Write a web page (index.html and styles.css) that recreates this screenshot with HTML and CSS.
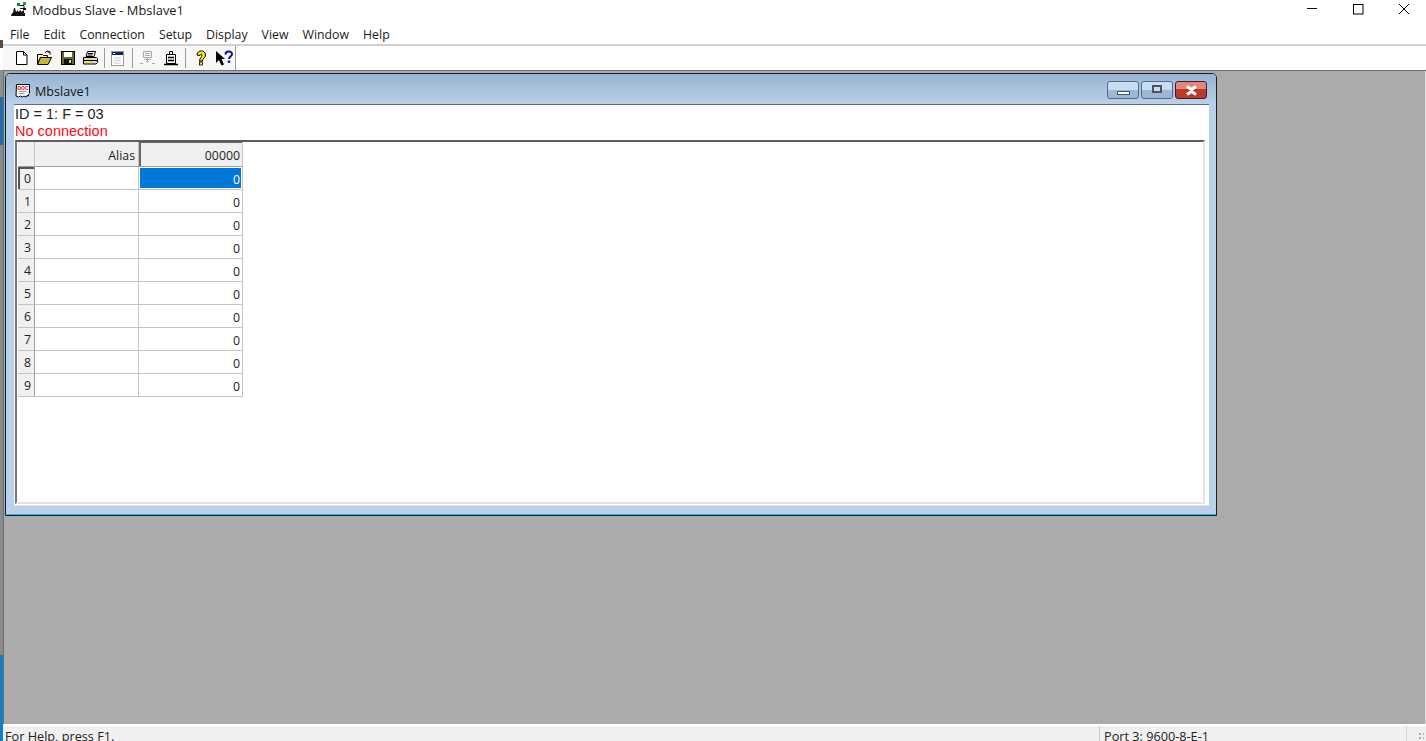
FILE: index.html
```html
<!DOCTYPE html>
<html lang="en">
<head>
<meta charset="utf-8">
<title>Modbus Slave - Mbslave1</title>
<link rel="stylesheet" href="styles.css">
</head>
<body>
<div class="screen">
  <div class="edge">
    <i class="seg seg-white-a"></i><i class="seg seg-dark-a"></i><i class="seg seg-white-b"></i><i class="seg seg-grey-a"></i><i class="seg seg-blue-a"></i><i class="seg seg-grey-b"></i><i class="seg seg-blue-b"></i>
  </div>
  <div class="app">
    <header class="titlebar">
      <svg class="app-icon" width="16" height="15" viewBox="0 0 16 15">
        <path d="M0 14h14v-3h-1V8l-3 2V8l-3 2V8L5 10 4 6H3l-1 5H1z" fill="#111"/>
        <path d="M8 3.5h5M13 3.5V7M9 6.5h4" stroke="#111" stroke-width="1" fill="none"/>
        <rect x="6" y="1" width="3" height="3" fill="#0a8a3a"/><rect x="12" y="0" width="3" height="3" fill="#16a34a"/><rect x="12" y="6" width="3" height="2" fill="#111"/>
      </svg>
      <span class="app-title">Modbus Slave - Mbslave1</span>
      <div class="caption">
        <button class="cap-btn"><svg width="12" height="12" viewBox="0 0 12 12"><path d="M1 5.500h10" stroke="#000"/></svg></button>
        <button class="cap-btn"><svg width="12" height="12" viewBox="0 0 12 12"><rect x="1.500" y="1.500" width="9.500" height="9.500" fill="none" stroke="#000"/></svg></button>
        <button class="cap-btn"><svg width="12" height="12" viewBox="0 0 12 12"><path d="M1 1l10 10M11 1L1 11" stroke="#000" stroke-width="1"/></svg></button>
      </div>
    </header>
    <nav class="menubar">
      <span>File</span><span>Edit</span><span>Connection</span><span>Setup</span><span>Display</span><span>View</span><span>Window</span><span>Help</span>
    </nav>
    <div class="toolbar-row">
      <div class="toolbar">
        <span class="gripper"></span>
        <span class="tool"><svg width="16" height="16" viewBox="0 0 16 16"><path d="M2.500 1.500h7l3.500 3.500v9.500h-10.500z" fill="#fff" stroke="#000"/><path d="M9.500 1.500v3.500h3.500" fill="none" stroke="#000"/></svg></span>
        <span class="tool"><svg width="17" height="16" viewBox="0 0 17 16"><path d="M1.500 4.500h5l1 1h4v2h-7l-3 6.500z" fill="#ffef8a" stroke="#000"/><path d="M1.500 14.500l3-7h11l-3.500 7z" fill="#c7b53a" stroke="#000"/><path d="M9 3c1-2 3-2.500 5-1M14 2v2.500M14 2h-2.500" fill="none" stroke="#000"/></svg></span>
        <span class="tool"><svg width="16" height="16" viewBox="0 0 16 16"><rect x="1.500" y="1.500" width="13" height="13" fill="#6b6b1e" stroke="#000"/><rect x="4" y="2" width="8" height="5" fill="#fff"/><rect x="4" y="9" width="8" height="5" fill="#111"/><rect x="9" y="10" width="2" height="3" fill="#cfcfcf"/></svg></span>
        <span class="tool"><svg width="17" height="16" viewBox="0 0 17 16"><path d="M5.500 1.500h8l-1.500 5h-8z" fill="#fff" stroke="#000"/><path d="M1.500 7.500h13l1 1v4l-1.500 1.500h-12.500z" fill="#d6d6d6" stroke="#000"/><path d="M6 3.500h5M5.500 5h5M2 10.500h13" stroke="#000"/><rect x="4" y="11" width="6" height="2" fill="#f2e22c"/></svg></span>
        <span class="sep sep-narrow"></span>
        <span class="tool"><svg width="15" height="17" viewBox="0 0 15 17"><rect x="1.500" y="1.500" width="12" height="14" fill="#fff" stroke="#9a9a9a"/><rect x="2" y="2" width="11" height="3" fill="#0a246a"/><rect x="3" y="3" width="2" height="1" fill="#fff"/><path d="M4 8h7M4 10.500h7M4 13h7" stroke="#c8c8c8"/></svg></span>
        <span class="sep"></span>
        <span class="tool"><svg width="17" height="16" viewBox="0 0 17 16"><path d="M4.500 1.500h8v6h-8zM6 3.500h5M6 5.500h5M8.500 8v3M5 9.500h7" fill="none" stroke="#a8a8a8"/><path d="M1 13.500h3M13 13.500h3M7 11.500h3" stroke="#a8a8a8"/></svg></span>
        <span class="tool"><svg width="16" height="16" viewBox="0 0 16 16"><path d="M6.500 1.500h3v3h-3z" fill="#fff" stroke="#000"/><path d="M3.500 4.500h9v9h-9z" fill="#f4f4f4" stroke="#000"/><path d="M5 7.500h6M5 10.500h6" stroke="#000" stroke-width="1.500"/><path d="M1 14.500h14" stroke="#000" stroke-width="1.500"/></svg></span>
        <span class="sep"></span>
        <span class="tool"><svg width="12" height="16" viewBox="0 0 12 16"><path d="M2 5c0-5.500 8.500-5.500 8.500 0 0 3-3 3-3 6H4.500c0-3 2.500-3.500 2.500-6 0-1.500-2-1-2 .5z" fill="#ffee00" stroke="#000"/><rect x="4.500" y="12" width="3" height="3" fill="#ffee00" stroke="#000" stroke-width=".8"/></svg></span>
        <span class="tool"><svg width="18" height="16" viewBox="0 0 18 16"><path d="M1 1v12l3-3 2.500 5.500 2.500-1-2.500-5.500H10z" fill="#000"/><path d="M10.500 4.500C10.500.5 17 .5 17 4c0 2.500-3 2.500-3 5" fill="none" stroke="#0a1a8c" stroke-width="2"/><rect x="12.800" y="10.500" width="2.400" height="2.400" fill="#0a1a8c"/></svg></span>
        <span class="sep sep-end"></span>
      </div>
    </div>
    <main class="mdi">
      <section class="child">
        <div class="child-title">
          <svg class="doc-icon" width="16" height="16" viewBox="0 0 16 16">
            <path d="M1.500 1.500h13v9l-1 1v1.500l-1.500-.5-1 1.500-2-1-1.500 1-2-1-2 1-2.500-1z" fill="#fff" stroke="#000"/>
            <text x="8" y="6.600" text-anchor="middle" class="doc-text">DOC</text>
            <path d="M3.500 8.500h8M3.500 10.500h6" stroke="#999"/>
          </svg>
          <span class="child-name">Mbslave1</span>
          <div class="child-btns">
            <button class="cb"><span class="glyph-min"></span></button>
            <button class="cb"><span class="glyph-max"></span></button>
            <button class="cb cb-close"><svg width="15" height="11" viewBox="0 0 15 11"><path d="M3 1.500l4.500 3 4.500-3M3 9.500l4.500-3 4.500 3" fill="none" stroke="#fff" stroke-width="3"/></svg></button>
          </div>
        </div>
        <div class="client">
          <div class="info">ID = 1: F = 03</div>
          <div class="info info-err">No connection</div>
          <div class="grid-well">
            <div class="grid">
              <div class="c hd corner"></div><div class="c hd right">Alias</div><div class="c hd right hd-active">00000</div>
              <div class="c rh rh-active">0</div><div class="c"></div><div class="c num sel">0</div>
              <div class="c rh">1</div><div class="c"></div><div class="c num">0</div>
              <div class="c rh">2</div><div class="c"></div><div class="c num">0</div>
              <div class="c rh">3</div><div class="c"></div><div class="c num">0</div>
              <div class="c rh">4</div><div class="c"></div><div class="c num">0</div>
              <div class="c rh">5</div><div class="c"></div><div class="c num">0</div>
              <div class="c rh">6</div><div class="c"></div><div class="c num">0</div>
              <div class="c rh">7</div><div class="c"></div><div class="c num">0</div>
              <div class="c rh">8</div><div class="c"></div><div class="c num">0</div>
              <div class="c rh">9</div><div class="c"></div><div class="c num">0</div>
            </div>
          </div>
        </div>
      </section>
    </main>
    <footer class="status">
      <span class="st-main">For Help, press F1.</span>
      <span class="st-port">Port 3: 9600-8-E-1</span>
      <span class="st-grip"></span>
    </footer>
  </div>
</div>
</body>
</html>
```
FILE: styles.css
```css
html, body { margin: 0; padding: 0; height: 100%; overflow: hidden; background: #fff; }
body { font-family: "Open Sans", "Noto Sans", sans-serif; color: #000; }
button { padding: 0; margin: 0; border: 0; background: none; }

.screen { display: flex; width: 1426px; height: 741px; overflow: hidden; }

.edge { width: 3px; flex: none; display: flex; flex-direction: column; }
.seg { display: block; flex: none; }
.seg-white-a { height: 40px; background: #fff; }
.seg-dark-a { height: 8px; background: #5a4a40; }
.seg-white-b { height: 22px; background: #fff; }
.seg-grey-a { height: 27px; background: #8f8f8f; }
.seg-blue-a { height: 48px; background: #1b6fb0; }
.seg-grey-b { height: 510px; background: #8a8a8a; }
.seg-blue-b { height: 86px; background: #0f80c8; }

.app { flex: 1; min-width: 0; display: flex; flex-direction: column; }

.titlebar { height: 22px; flex: none; display: flex; align-items: flex-start; background: #fff; }
.app-icon { margin: 2px 0 0 8px; }
.app-title { margin-left: 5px; font-size: 12.930px; line-height: 20px; color: #1a1a1a; }
.caption { margin-left: auto; margin-right: -1px; display: flex; }
.cap-btn { width: 46px; height: 18px; display: flex; align-items: center; justify-content: center; }

.menubar { height: 22px; flex: none; display: flex; gap: 14px; padding: 3px 0 0 7px; align-items: center; font-size: 12.320px; line-height: 19px; color: #1a1a1a; background: #fff; box-sizing: border-box; }

.toolbar-row { height: 27px; flex: none; box-sizing: border-box; border-top: 2px solid #cfcfcf; border-bottom: 1px solid #6e6e6e; background: #fff; }
.toolbar { width: 233px; height: 24px; display: flex; align-items: center; background: #f7f7f7; }
.gripper { width: 2px; height: 20px; margin: 0 7px 0 0; background: repeating-linear-gradient(#c4c4c4 0 2px, transparent 2px 4px); }
.tool { width: 23px; height: 24px; flex: none; display: flex; align-items: center; justify-content: center; }
.sep { width: 1px; height: 20px; flex: none; margin: 0 3px; background: #9c9c9c; }
.sep-narrow { margin: 0 1.500px; }
.sep-end { margin: 0; height: 24px; }

.mdi { flex: 1; min-height: 0; position: relative; background: #ababab; border-left: 1px solid #6e6e6e; border-right: 1px solid #dcdcdc; }

.child { position: absolute; left: 1px; top: 2px; width: 1212px; height: 443px; box-sizing: border-box; border: 1px solid #10202e; border-radius: 5px 5px 0 0; background: #b9d1ea; box-shadow: inset 0 -1px 0 #1cc0e0; display: flex; flex-direction: column; }
.child-title { height: 30px; flex: none; display: flex; align-items: center; padding: 4px 9px 0 9px; box-sizing: border-box; background: linear-gradient(#99b4d1, #b9d1ea); border-radius: 4px 4px 0 0; }
.doc-icon { flex: none; }
.doc-text { font: bold 5px "Liberation Sans", sans-serif; fill: #e01010; }
.child-name { margin-left: 4px; font-size: 12.600px; color: #111; }
.child-btns { margin-left: auto; display: flex; gap: 2px; margin-top: -2px; }
.cb { width: 32px; height: 18px; box-sizing: border-box; border: 1px solid #4f6a86; border-radius: 3px; background: linear-gradient(#cadcf0 0 50%, #9db8d4 50% 100%); display: flex; align-items: center; justify-content: center; }
.glyph-min { width: 13px; height: 4px; margin-top: 5px; box-sizing: border-box; border: 1px solid #44546a; background: #fff; }
.glyph-max { width: 10px; height: 8px; margin-top: -2px; box-sizing: border-box; border: 2px solid #44546a; background: #d8d8d8; }
.cb-close { border-color: #4e1628; background: linear-gradient(#e0897a 0 45%, #b73c2a 45% 100%); }

.client { flex: 1; min-height: 0; margin: 0 7px 9px 8px; padding: 0 0 1px 1px; box-sizing: border-box; background: #fff; border-top: 1px solid #696969; border-bottom: 1px solid #e4e4e4; display: flex; flex-direction: column; }
.info { height: 17px; flex: none; font: 14.500px/18px "Liberation Sans", sans-serif; color: #222; }
.info-err { color: #fa0b12; }
.grid-well { flex: 1; min-height: 0; margin: 1px 4px 0 0; box-sizing: border-box; border-top: 2px solid #5e5e5e; border-left: 2px solid #777; border-bottom: 2px solid #e4e4e4; border-right: 2px solid #e4e4e4; padding: 0 0 0 1px; }

.grid { display: grid; grid-template-columns: 17px 104px 104px; grid-template-rows: 25px repeat(10, 23px); width: 225px; font-size: 12.300px; color: #222; }
.c { box-sizing: border-box; border-right: 1px solid #c4c4c4; border-bottom: 1px solid #c4c4c4; line-height: 24px; padding-right: 2px; text-align: right; }
.hd { background: #f0f0f0; border-bottom-color: #a0a0a0; line-height: 28px; padding-right: 3px; }
.hd-active { box-shadow: inset 2px 0 0 #696969, inset 0 1px 0 #696969; padding-right: 2px; }
.rh { background: #f0f0f0; border-right-color: #a0a0a0; padding-right: 3px; color: #222; }
.rh-active { box-shadow: inset 2px 0 0 #555, inset 0 2px 0 #555; }
.num { line-height: 25px; }
.sel { background: #0078d7; color: #fff; box-shadow: inset 1px 1px 0 #fff, inset -1px -1px 0 #fff; }

.status { height: 17px; flex: none; display: flex; box-sizing: border-box; border-top: 2px solid #fff; background: #f0f0f0; font-size: 12.700px; line-height: 21px; color: #222; overflow: hidden; }
.st-main { width: 1097px; flex: none; padding-left: 2px; box-sizing: border-box; border-right: 1px solid #c8c8c8; }
.st-port { width: 307px; flex: none; padding-left: 4px; box-sizing: border-box; border-right: 1px solid #d8d8d8; }
.st-grip { flex: 1; margin: 6px 2px 1px 11px; background: radial-gradient(#a8a8a8 1px, transparent 1px) 0 0 / 4px 4px; }
```
